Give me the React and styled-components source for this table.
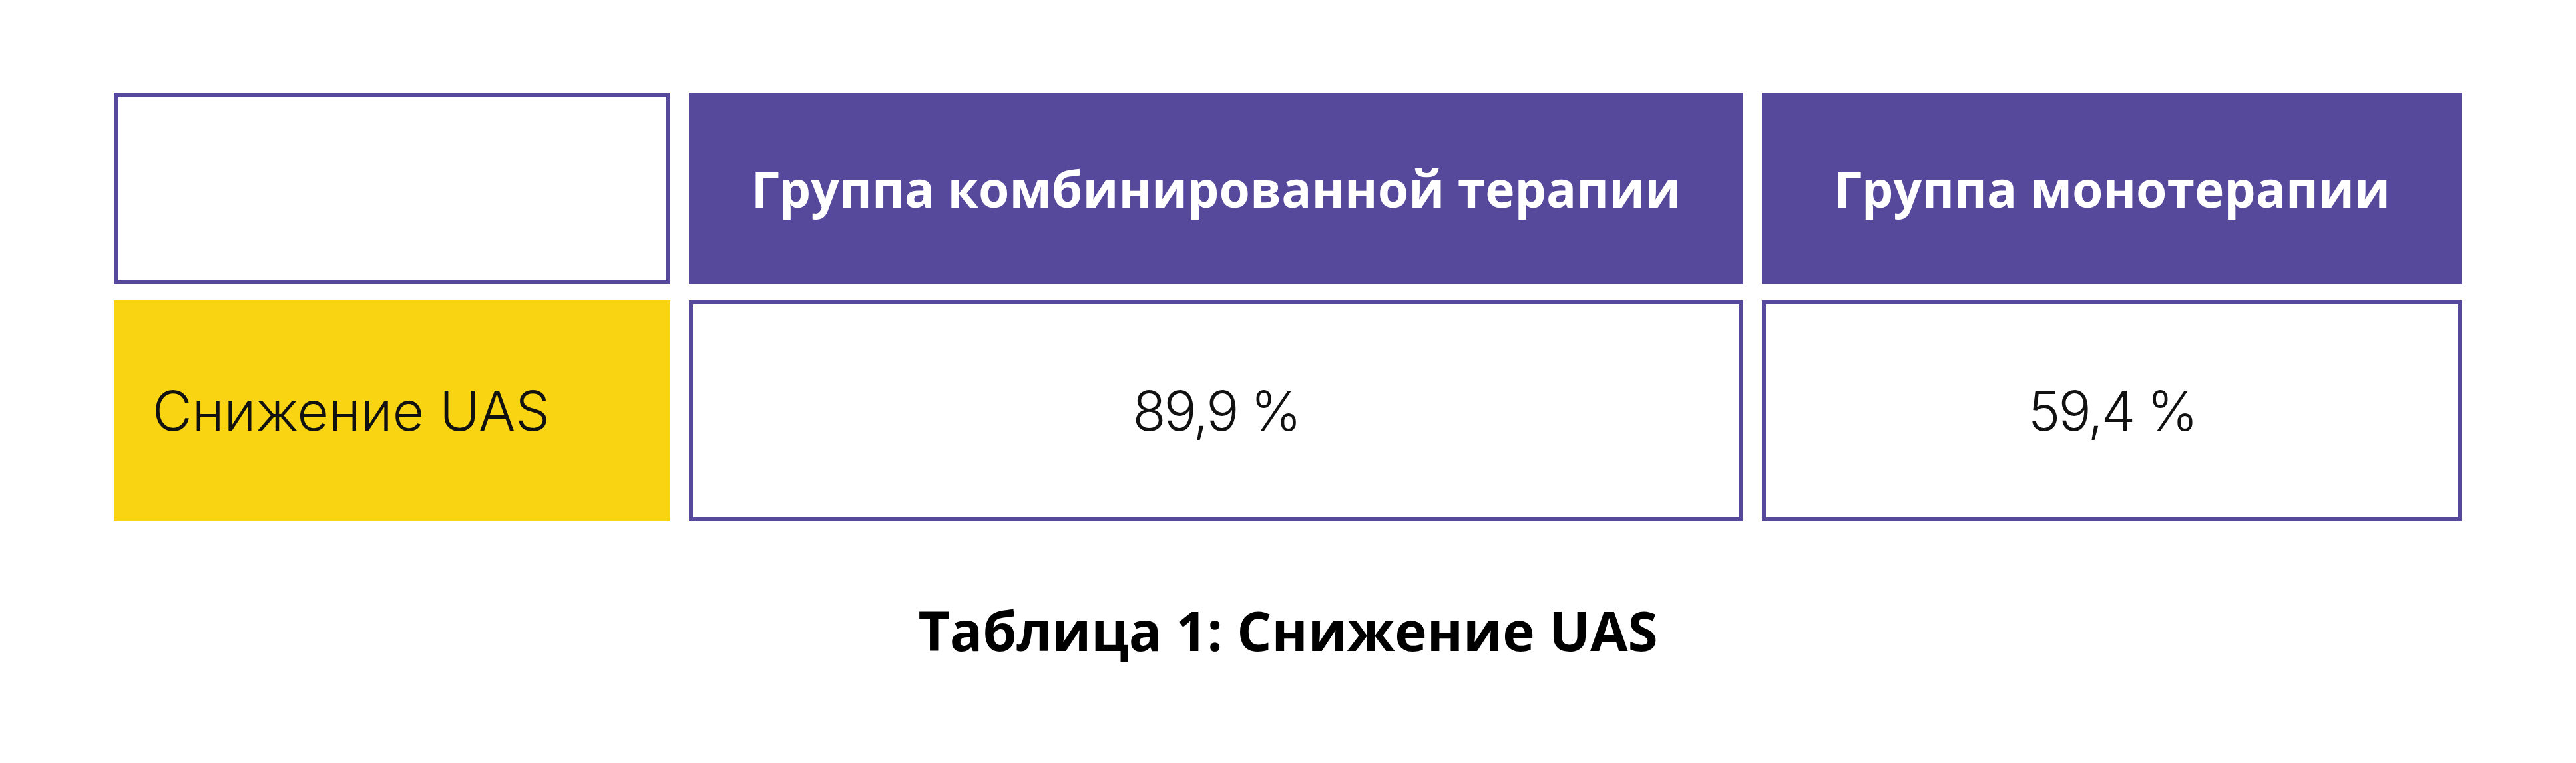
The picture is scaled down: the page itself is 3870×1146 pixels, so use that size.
import styled, { createGlobalStyle } from "styled-components";

const PURPLE = "#56489a";
const YELLOW = "#f9d413";

const GlobalStyle = createGlobalStyle`
  html, body {
    margin: 0;
    padding: 0;
    background: #ffffff;
  }
  body {
    font-family: "Open Sans", "Liberation Sans", sans-serif;
  }
`;

const Page = styled.div`
  width: 3870px;
  height: 1146px;
  box-sizing: border-box;
  padding: 139px 0 0 171px;
  display: flex;
  flex-direction: column;
`;

const Table = styled.div`
  display: grid;
  grid-template-columns: 836px 1584px 1052px;
  grid-template-rows: 288px 332px;
  column-gap: 28px;
  row-gap: 24px;
`;

const Cell = styled.div`
  box-sizing: border-box;
  display: flex;
  align-items: center;
  justify-content: ${(p) => (p.$left ? "flex-start" : "center")};
  padding: ${(p) => (p.$left ? "0 0 0 58px" : "0")};
  background: ${(p) =>
    p.$variant === "head" ? PURPLE : p.$variant === "label" ? YELLOW : "#ffffff"};
  border: ${(p) => (p.$variant === "outline" ? `6px solid ${PURPLE}` : "none")};
`;

const HeadText = styled.span`
  color: #ffffff;
  font-family: "Open Sans", "Liberation Sans", sans-serif;
  font-weight: 700;
  font-size: 75px;
  white-space: nowrap;
`;

const BodyText = styled.span`
  color: #111111;
  font-family: "Inter", "Liberation Sans", sans-serif;
  font-weight: 300;
  font-size: 82px;
  letter-spacing: ${(p) => (p.$tight ? "-3px" : "0")};
  white-space: nowrap;
`;

const Caption = styled.div`
  width: 3528px;
  margin-top: 122px;
  text-align: center;
  color: #000000;
  font-family: "Open Sans", "Liberation Sans", sans-serif;
  font-weight: 700;
  font-size: 82px;
  line-height: 1;
`;

export default function App() {
  return (
    <>
      <GlobalStyle />
      <Page>
        <Table>
          <Cell $variant="outline" />
          <Cell $variant="head">
            <HeadText>Группа комбинированной терапии</HeadText>
          </Cell>
          <Cell $variant="head">
            <HeadText>Группа монотерапии</HeadText>
          </Cell>
          <Cell $variant="label" $left>
            <BodyText>Снижение UAS</BodyText>
          </Cell>
          <Cell $variant="outline">
            <BodyText $tight>89,9 %</BodyText>
          </Cell>
          <Cell $variant="outline">
            <BodyText $tight>59,4 %</BodyText>
          </Cell>
        </Table>
        <Caption>Таблица 1: Снижение UAS</Caption>
      </Page>
    </>
  );
}
